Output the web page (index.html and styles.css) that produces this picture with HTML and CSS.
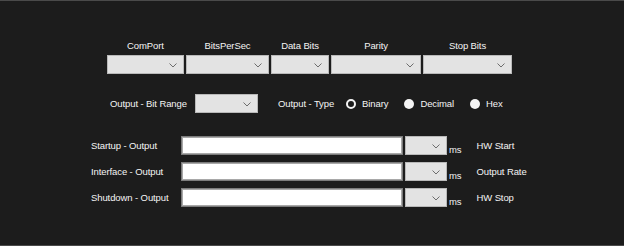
FILE: index.html
```html
<!DOCTYPE html>
<html lang="en">
<head>
    <meta charset="UTF-8">
    <title>Serial Output Settings</title>
    <link rel="stylesheet" href="styles.css">
</head>
<body>
    <div class="window">
        <div class="serial-row">
            <div class="field w-comport">
                <span class="field-label">ComPort</span>
                <div class="combo"><svg class="chevron" viewBox="0 0 8 5"><polyline points="0.5,0.5 4,4 7.5,0.5"/></svg></div>
            </div>
            <div class="field w-baud">
                <span class="field-label">BitsPerSec</span>
                <div class="combo"><svg class="chevron" viewBox="0 0 8 5"><polyline points="0.5,0.5 4,4 7.5,0.5"/></svg></div>
            </div>
            <div class="field w-data">
                <span class="field-label">Data Bits</span>
                <div class="combo"><svg class="chevron" viewBox="0 0 8 5"><polyline points="0.5,0.5 4,4 7.5,0.5"/></svg></div>
            </div>
            <div class="field w-parity">
                <span class="field-label">Parity</span>
                <div class="combo"><svg class="chevron" viewBox="0 0 8 5"><polyline points="0.5,0.5 4,4 7.5,0.5"/></svg></div>
            </div>
            <div class="field w-stop">
                <span class="field-label">Stop Bits</span>
                <div class="combo"><svg class="chevron" viewBox="0 0 8 5"><polyline points="0.5,0.5 4,4 7.5,0.5"/></svg></div>
            </div>
        </div>

        <div class="type-row">
            <span class="range-label">Output - Bit Range</span>
            <div class="combo w-range"><svg class="chevron" viewBox="0 0 8 5"><polyline points="0.5,0.5 4,4 7.5,0.5"/></svg></div>
            <span class="type-label">Output - Type</span>
            <label class="radio"><span class="dot checked"></span>Binary</label>
            <label class="radio"><span class="dot"></span>Decimal</label>
            <label class="radio"><span class="dot"></span>Hex</label>
        </div>

        <div class="output-rows">
            <div class="output-row">
                <span class="row-label">Startup - Output</span>
                <div class="text-box"></div>
                <div class="combo w-ms"><svg class="chevron" viewBox="0 0 8 5"><polyline points="0.5,0.5 4,4 7.5,0.5"/></svg></div>
                <span class="unit">ms</span>
                <span class="side-label">HW Start</span>
            </div>
            <div class="output-row">
                <span class="row-label">Interface - Output</span>
                <div class="text-box"></div>
                <div class="combo w-ms"><svg class="chevron" viewBox="0 0 8 5"><polyline points="0.5,0.5 4,4 7.5,0.5"/></svg></div>
                <span class="unit">ms</span>
                <span class="side-label">Output Rate</span>
            </div>
            <div class="output-row">
                <span class="row-label">Shutdown - Output</span>
                <div class="text-box"></div>
                <div class="combo w-ms"><svg class="chevron" viewBox="0 0 8 5"><polyline points="0.5,0.5 4,4 7.5,0.5"/></svg></div>
                <span class="unit">ms</span>
                <span class="side-label">HW Stop</span>
            </div>
        </div>
    </div>
</body>
</html>
```

FILE: styles.css
```css
* {
    margin: 0;
    padding: 0;
    box-sizing: border-box;
}

body {
    font-family: 'Liberation Sans', Arial, sans-serif;
    font-size: 9.5px;
    letter-spacing: -0.1px;
    background-color: #1c1c1c;
    color: #f4f4f4;
}

.window {
    height: 246px;
    background: #1c1c1c;
    border-top: 1px solid #4a4a4a;
    border-bottom: 1px solid #4a4a4a;
    padding-top: 39px;
}

/* serial settings */
.serial-row {
    display: flex;
    gap: 2px;
    margin-left: 107px;
}

.field {
    display: flex;
    flex-direction: column;
    align-items: center;
}

.field-label {
    line-height: 12px;
    margin-bottom: 3px;
}

.field .combo {
    width: 100%;
}

.w-comport { width: 77px; }
.w-baud { width: 83px; }
.w-data { width: 58px; }
.w-parity { width: 90px; }
.w-stop { width: 89px; }

.combo {
    position: relative;
    height: 19px;
    background: #e3e3e3;
    border: 1px solid #b9b9b9;
}

.chevron {
    position: absolute;
    right: 6px;
    top: 7px;
    width: 8px;
    height: 5px;
    fill: none;
    stroke: #6d6d6d;
    stroke-width: 1;
}

/* output type */
.type-row {
    display: flex;
    align-items: center;
    margin-top: 20px;
    margin-left: 110px;
    height: 19px;
}

.range-label {
    width: 85px;
}

.w-range {
    width: 63px;
}

.type-label {
    margin-left: 20px;
    margin-right: 12px;
}

.radio {
    display: flex;
    align-items: center;
    margin-right: 16px;
}

.dot {
    width: 10px;
    height: 10px;
    border-radius: 50%;
    background: #f4f4f4;
    margin-right: 6px;
}

.dot.checked {
    background: #1c1c1c;
    border: 2px solid #f4f4f4;
}

/* output rows */
.output-rows {
    display: flex;
    flex-direction: column;
    gap: 7px;
    margin-top: 23px;
    margin-left: 91px;
}

.output-row {
    display: flex;
    align-items: center;
    height: 19px;
}

.row-label {
    width: 90px;
}

.text-box {
    width: 222px;
    height: 19px;
    background: #ffffff;
    border: 1px solid #7c7c7c;
    box-shadow: inset 0 0 0 1px #a8a8a8;
}

.w-ms {
    width: 42px;
    margin-left: 2px;
}

.unit {
    align-self: flex-end;
    margin-left: 2px;
    line-height: 10px;
}

.side-label {
    margin-left: 15px;
}
```
